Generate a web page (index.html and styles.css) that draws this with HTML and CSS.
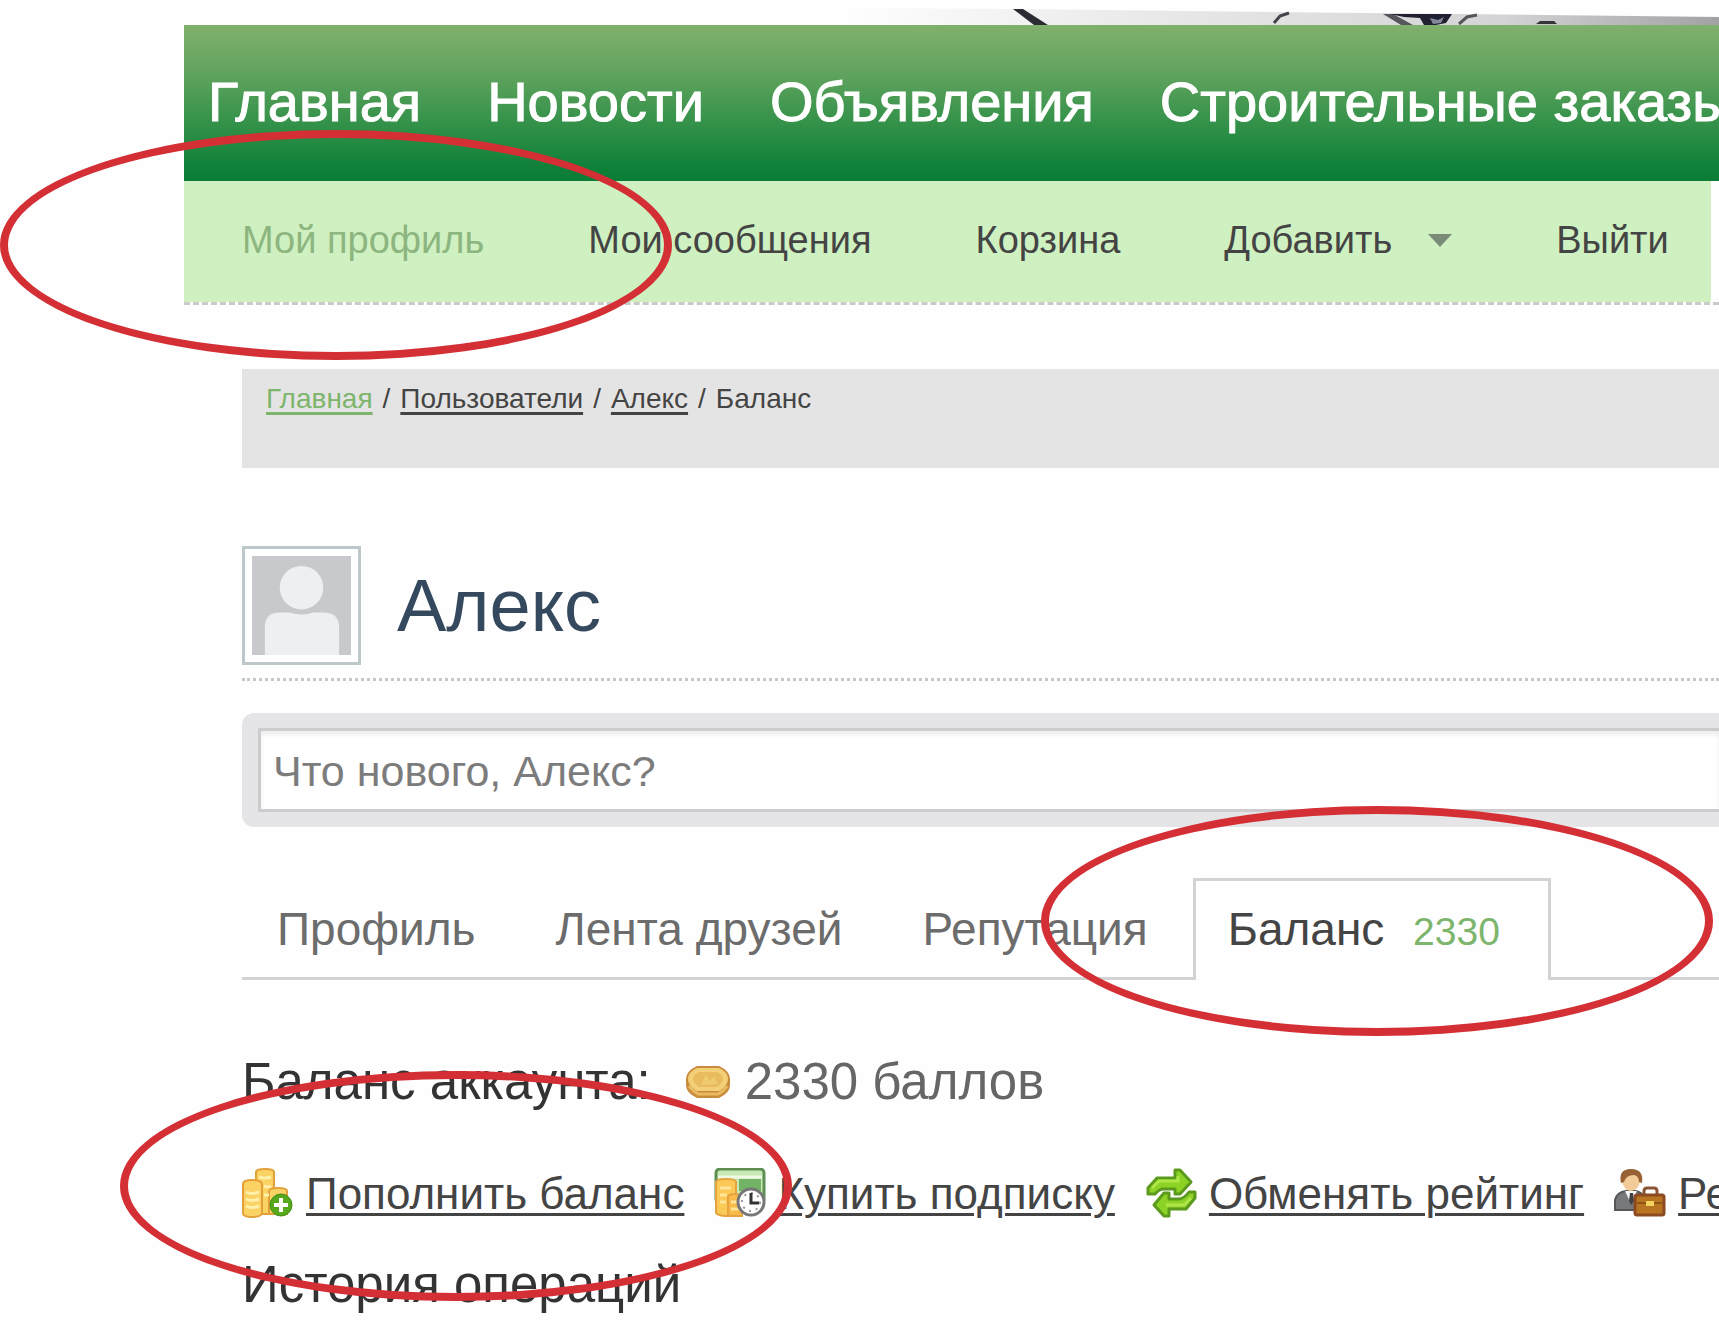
FILE: index.html
```html
<!DOCTYPE html>
<html lang="ru">
<head>
<meta charset="utf-8">
<meta name="viewport" content="width=device-width, initial-scale=1">
<title>Баланс</title>
<link rel="stylesheet" href="styles.css">
</head>
<body>
<div class="page">
  <header class="site-header">
    <svg class="banner" viewBox="0 0 1535 25" preserveAspectRatio="xMaxYMax slice" aria-hidden="true">
      <defs>
        <linearGradient id="sky" x1="0" x2="1" y1="0" y2="0">
          <stop offset="0" stop-color="#fefefe"/>
          <stop offset=".4" stop-color="#e6e6e6"/>
          <stop offset=".75" stop-color="#d4d4d6"/>
          <stop offset="1" stop-color="#a2a2a4"/>
        </linearGradient>
      </defs>
      <path d="M660 8L830 9L1535 17V25H660z" fill="url(#sky)"/>
      <path d="M829 9h10l25 16h-14z" fill="#2b2b33"/>
      <path d="M1090 23l6-7 9-3" fill="none" stroke="#44444c" stroke-width="3"/>
      <path d="M1199 14h10l20 11h-12z" fill="#55555c"/>
      <path d="M1206 14h62l-6 9-10 2h-12l-4-7-16-1z" fill="#1f2030"/>
      <path d="M1246 18l8 2 6-3-3 6-8 1z" fill="#85889a"/>
      <path d="M1275 24l8-7 10-2" fill="none" stroke="#55555c" stroke-width="3"/>
      <path d="M1352 24l4-3h14l3 3z" fill="#33333a"/>
    </svg>
    <nav class="main-nav">
      <a href="#">Главная</a>
      <a href="#">Новости</a>
      <a href="#">Объявления</a>
      <a href="#">Строительные заказы</a>
    </nav>
    <div class="user-bar">
      <nav class="user-nav">
        <a class="current" href="#">Мой профиль</a>
        <a href="#">Мои сообщения</a>
        <a href="#">Корзина</a>
        <a class="has-menu" href="#">Добавить</a>
        <a href="#">Выйти</a>
      </nav>
    </div>
  </header>

  <main class="content">
    <nav class="breadcrumbs">
      <a class="home" href="#">Главная</a>
      <span>/</span>
      <a href="#">Пользователи</a>
      <span>/</span>
      <a href="#">Алекс</a>
      <span>/</span>
      <span>Баланс</span>
    </nav>

    <div class="profile-head">
      <svg class="avatar" viewBox="0 0 100 100" aria-hidden="true">
        <rect width="100" height="100" fill="#c8c9cc"/>
        <ellipse cx="50" cy="32" rx="22" ry="22" fill="#eeeff2"/>
        <path d="M13 100V72q0-15 15-15h10q12 4 24 0h10q16 0 16 15v28z" fill="#eeeff2"/>
      </svg>
      <h1>Алекс</h1>
    </div>

    <form class="status">
      <input type="text" placeholder="Что нового, Алекс?" aria-label="Что нового, Алекс?">
    </form>

    <nav class="tabs">
      <a href="#">Профиль</a>
      <a href="#">Лента друзей</a>
      <a href="#">Репутация</a>
      <a class="active" href="#">Баланс <span class="count">2330</span></a>
    </nav>

    <div class="balance">
      <span class="label">Баланс аккаунта:</span>
      <span class="sum">
        <svg class="coin" viewBox="0 0 46 34" aria-hidden="true">
          <path d="M12 1h22q11 5 11 13v6q0 8-11 13H12Q1 28 1 20v-6Q1 6 12 1z" fill="#c98b3c"/>
          <path d="M12 3h22q9 4 9 11t-9 12H12Q3 21 3 14t9-11z" fill="#f3cf78"/>
          <path d="M14 7h18q6 3 6 7t-6 8H14q-6-4-6-8t6-7z" fill="#e8bb5e"/>
          <path d="M16 20l5-11 4 7 4-5 4 8z" fill="#f0ca70"/>
          <path d="M4 21q4 5 9 8h20q6-3 9-8" fill="none" stroke="#e9bb60" stroke-width="3"/>
        </svg>
        2330 баллов
      </span>
    </div>

    <div class="actions">
      <a href="#">
        <svg viewBox="0 0 52 52" aria-hidden="true">
          <g fill="#fbd264" stroke="#e2a03a" stroke-width="2">
            <path d="M14 4q0-3 9-3t9 3v42H14z"/>
            <path d="M27 23q0-3 9-3t9 3v23H27z"/>
            <path d="M1 16q0-4 9-4t10 4v30q-2 3-10 3t-9-3z"/>
          </g>
          <path d="M4 24q6 3 13 0M4 31q6 3 13 0M4 38q6 3 13 0M17 9q6 2 12 0M22 18q4 2 7 0M22 27h5" fill="none" stroke="#fff0ac" stroke-width="3"/>
          <circle cx="39" cy="37" r="11" fill="#58a81d" stroke="#3d8e12" stroke-width="1"/>
          <path d="M39 30v14M32 37h14" stroke="#fff" stroke-width="4"/>
        </svg><span>Пополнить баланс</span></a>
      <a href="#">
        <svg viewBox="0 0 52 52" aria-hidden="true">
          <rect x="2" y="1" width="48" height="34" rx="4" fill="#c8e8b4" stroke="#5d8f53" stroke-width="3"/>
          <path d="M4 9h44" stroke="#eef9e6" stroke-width="3"/>
          <path d="M25 11h22v12H25z" fill="#72b365"/>
          <path d="M2 14q0-3 10-3t10 3v32q-3 2-10 2T2 45z" fill="#fbc956" stroke="#e5a240" stroke-width="2"/>
          <path d="M14 28q2-2 7-2t7 2v20H14z" fill="#f8bb4a" stroke="#e5a240" stroke-width="2"/>
          <path d="M6 20h11M6 27h7M6 34h6M17 34h8M17 41h8" stroke="#ffe49a" stroke-width="3"/>
          <circle cx="37" cy="34" r="13" fill="#fff" stroke="#777" stroke-width="3"/>
          <circle cx="37" cy="34" r="9" fill="none" stroke="#999" stroke-width="2" stroke-dasharray="2 5"/>
          <path d="M37 25v10h8" fill="none" stroke="#333" stroke-width="3"/>
        </svg><span>Купить подписку</span></a>
      <a href="#">
        <svg viewBox="0 0 52 52" aria-hidden="true">
          <g fill="#8cd326" stroke="#5b9a1c" stroke-width="3" stroke-linejoin="round">
            <path d="M3 26v-6l9-10h18V2h5l11 12-11 12h-5v-5H19q-5 0-9 5z"/>
            <path d="M50 24v6l-9 11H24v7h-5L9 37l10-12h5v6h9q6 0 11-7z"/>
          </g>
          <path d="M7 20l7-7h19V8M46 30l-7 7H21" fill="none" stroke="#b0e648" stroke-width="3"/>
        </svg><span>Обменять рейтинг</span></a>
      <a href="#">
        <svg viewBox="0 0 52 52" aria-hidden="true">
          <path d="M1 42V32q2-8 11-9h10q8 2 9 9v10z" fill="#77797b" stroke="#55575a" stroke-width="2"/>
          <path d="M11 23h12l-6 13z" fill="#f4f4f4"/>
          <path d="M16 25h3l1 8-3 4-2-4z" fill="#3d4145"/>
          <ellipse cx="17" cy="12" rx="9" ry="11" fill="#f2cb98"/>
          <path d="M7 15Q4 1 17 1t11 14l-3-1q0-6-5-7-8 0-10 7z" fill="#976134"/>
          <path d="M30 27v-4q0-3 3-3h7q3 0 3 3v4" fill="none" stroke="#8d5335" stroke-width="3"/>
          <rect x="21" y="27" width="29" height="20" rx="2" fill="#b87420" stroke="#8c4a22" stroke-width="3"/>
          <path d="M23 35h25" stroke="#8f5715" stroke-width="2"/>
          <path d="M32 33h8v5h-8z" fill="#f5d45e"/>
        </svg><span>Рейтинг</span></a>
    </div>

    <h2>История операций</h2>
  </main>

  <div class="mark mark-profile"></div>
  <div class="mark mark-balance"></div>
  <div class="mark mark-refill"></div>
</div>
</body>
</html>
```

FILE: styles.css
```css
* {
  box-sizing: border-box;
}

body {
  margin: 0;
  background: #fefefe;
  color: #444;
  font-family: "Liberation Sans", Arial, sans-serif;
}

a {
  color: inherit;
}

h1,
h2 {
  margin: 0;
  font-weight: normal;
}

.page {
  position: relative;
  min-height: 100vh;
  padding-left: 184px;
  overflow: hidden;
  white-space: nowrap;
}

/* Header */
.banner {
  display: block;
  width: 100%;
  height: 25px;
}

.main-nav {
  display: flex;
  align-items: center;
  gap: 66px;
  height: 156px;
  padding: 0 0 4px 24px;
  overflow: hidden;
  background: linear-gradient(#80b06c, #64a560 28%, #35924a 62%, #0e8038 92%, #0b7d36);
  color: #fff;
  font-size: 56px;
  -webkit-text-stroke: 1px #fff;
}

.main-nav a,
.user-nav a,
.tabs a {
  text-decoration: none;
}

.user-bar {
  padding-right: 8px;
  border-bottom: 3px dashed #c9cbc9;
}

.user-nav {
  display: flex;
  align-items: center;
  gap: 104px;
  height: 121px;
  padding: 0 0 3px 58px;
  background: #cff0c0;
  font-size: 38px;
}

.user-nav .current {
  color: #8db580;
}

.has-menu::after {
  content: "";
  display: inline-block;
  margin-left: 36px;
  border: 12px solid transparent;
  border-top: 13px solid #7c8a78;
  border-bottom: 0;
  vertical-align: 6px;
}

/* Content */
.content {
  padding-left: 58px;
}

.breadcrumbs {
  display: flex;
  gap: 10px;
  height: 99px;
  margin-top: 64px;
  padding: 14px 24px;
  background: #e5e4e5;
  font-size: 28px;
  line-height: 32px;
}

.breadcrumbs a {
  text-decoration-thickness: 3px;
  text-underline-offset: 4px;
}

.breadcrumbs .home {
  color: #7db56c;
}

.profile-head {
  display: flex;
  align-items: center;
  gap: 36px;
  margin-top: 78px;
  padding-bottom: 13px;
  border-bottom: 3px dotted #c6c9cc;
}

.avatar {
  width: 119px;
  height: 119px;
  padding: 7px;
  border: 3px solid #bdc8ca;
  background: #fff;
}

h1 {
  color: #34495e;
  font-size: 74px;
  line-height: 80px;
}

.status {
  margin-top: 32px;
  padding: 15px 0 15px 16px;
  border-radius: 12px 0 0 12px;
  background: #e5e4e6;
}

.status input {
  display: block;
  width: 100%;
  height: 84px;
  padding: 2px 12px 0;
  border: 3px solid #cdcbcd;
  border-right: 0;
  background: #fff;
  box-shadow: inset 0 4px 4px #eee;
  color: #444;
  font: 43px "Liberation Sans", Arial, sans-serif;
}

.status input::placeholder {
  color: #7c7c7c;
  opacity: 1;
}

.tabs {
  display: flex;
  gap: 10px;
  margin-top: 51px;
  border-bottom: 3px solid #d2d3d4;
  color: #6c6c6c;
  font-size: 46px;
}

.tabs a {
  height: 102px;
  margin-bottom: -3px;
  padding: 0 32px;
  border: 3px solid transparent;
  border-bottom: 0;
  line-height: 96px;
}

.tabs .active {
  border-color: #d2d3d4;
  background: #fefefe;
  color: #444;
}

.count {
  padding: 0 16px;
  color: #7db56c;
  font-size: 39px;
}

.balance {
  display: flex;
  gap: 34px;
  margin-top: 72px;
  font-size: 51px;
  line-height: 60px;
}

.label,
h2 {
  color: #333;
}

.sum {
  display: flex;
  align-items: center;
  gap: 14px;
  color: #666;
}

.coin {
  width: 46px;
  height: 34px;
}

.actions {
  display: flex;
  gap: 30px;
  margin-top: 56px;
  font-size: 44px;
  line-height: 52px;
}

.actions a {
  display: flex;
  gap: 12px;
  text-decoration: none;
}

.actions span {
  text-decoration: underline 3px;
  text-underline-offset: 4px;
}

.actions svg {
  flex: none;
  width: 52px;
  height: 52px;
}

h2 {
  margin-top: 35px;
  font-size: 51px;
  line-height: 60px;
}

/* Red ovals that point out the steps */
.mark {
  position: absolute;
  width: 672px;
  height: 230px;
  border: 8px solid #d32f35;
  border-radius: 50%;
  pointer-events: none;
}

.mark-profile {
  top: 130px;
  left: 0;
}

.mark-balance {
  top: 806px;
  left: 1041px;
}

.mark-refill {
  top: 1071px;
  left: 120px;
}
```
